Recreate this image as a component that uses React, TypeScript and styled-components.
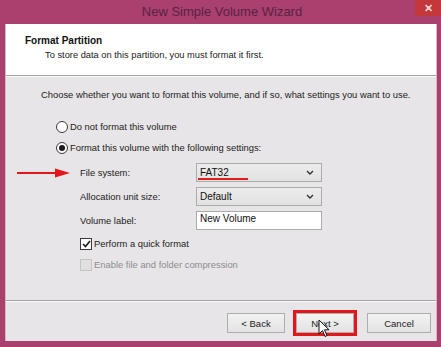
import React from "react";
import styled, { createGlobalStyle } from "styled-components";

const GlobalStyle = createGlobalStyle`
  html, body { margin: 0; padding: 0; background: #a9406e; }
  body { font-family: "Liberation Sans", Arial, sans-serif; }
`;

const Frame = styled.div`
  position: relative;
  width: 441px;
  height: 347px;
  background: #a9406e;
  overflow: hidden;
  display: flex;
  flex-direction: column;
`;

const TitleBar = styled.div`
  height: 24px;
  display: grid;
  grid-template-columns: 26px 1fr 26px;
  align-items: start;
`;

const Title = styled.div`
  grid-column: 2;
  text-align: center;
  font-size: 13px;
  line-height: 24px;
  color: #5a2244;
  padding-left: 3px;
`;

const CloseButton = styled.div`
  height: 16px;
  background: #c4373a;
  color: #f4d9d9;
  font-size: 11px;
  font-weight: bold;
  display: flex;
  align-items: center;
  justify-content: center;
`;

const Window = styled.div`
  margin: 0 4px 0 5px;
  height: 317px;
  display: flex;
  flex-direction: column;
  border-left: 1px solid #d8b4c6;
  border-right: 1px solid #d8b4c6;
  box-sizing: border-box;
`;

const Header = styled.div`
  height: 52px;
  box-sizing: border-box;
  background: #ffffff;
  border-bottom: 1px solid #a3a3a3;
  padding: 10px 0 0 19px;
`;

const HeaderTitle = styled.div`
  font-weight: bold;
  font-size: 10px;
  line-height: 13px;
  color: #111;
`;

const HeaderSub = styled.div`
  font-size: 9.3px;
  line-height: 13px;
  color: #222;
  margin: 2px 0 0 20px;
`;

const Body = styled.div`
  flex: 1;
  background: #e7e5e7;
  border-top: 1px solid #fafafa;
  padding: 11px 0 0 35px;
  display: flex;
  flex-direction: column;
`;

const Text = styled.div<{ $muted?: boolean }>`
  font-size: 9.4px;
  line-height: 14px;
  color: ${(p) => (p.$muted ? "#8e8c8e" : "#1c1c1c")};
`;

const RadioGroup = styled.div`
  display: flex;
  flex-direction: column;
  gap: 5px;
  margin: 17px 0 0 15px;
`;

const OptionRow = styled.label`
  display: flex;
  align-items: center;
  gap: 2px;
  height: 16px;
`;

const RadioCircle = styled.span<{ $checked?: boolean }>`
  width: 12px;
  height: 12px;
  box-sizing: border-box;
  border-radius: 50%;
  border: 1px solid #3b3b3b;
  background: #fdfdfd;
  display: flex;
  align-items: center;
  justify-content: center;
  &::after {
    content: "";
    width: 6px;
    height: 6px;
    border-radius: 50%;
    background: ${(p) => (p.$checked ? "#1a1a1a" : "transparent")};
  }
`;

const FormGrid = styled.div`
  display: grid;
  grid-template-columns: 116px 126px;
  grid-auto-rows: 19px;
  row-gap: 5px;
  margin: 7px 0 0 39px;
  align-items: center;
`;

const LabelCell = styled.div`
  position: relative;
  font-size: 9.4px;
  color: #1c1c1c;
`;

const Arrow = styled.svg`
  position: absolute;
  left: -63px;
  top: 50%;
  margin-top: -5px;
`;

const Combo = styled.div`
  position: relative;
  height: 19px;
  box-sizing: border-box;
  border: 1px solid #ababab;
  background: linear-gradient(#ececec, #e2e2e2);
  display: flex;
  align-items: center;
  justify-content: space-between;
  padding: 0 7px 0 3px;
  font-size: 10px;
  color: #111;
`;

const Underline = styled.span`
  position: absolute;
  left: 1px;
  bottom: 1px;
  width: 50px;
  height: 2px;
  background: #e21b1b;
`;

const TextBox = styled.div`
  height: 19px;
  box-sizing: border-box;
  border: 1px solid #ababab;
  background: #ffffff;
  padding: 1px 0 0 3px;
  font-size: 10px;
  color: #111;
`;

const CheckGroup = styled.div`
  display: flex;
  flex-direction: column;
  gap: 5px;
  margin: 6px 0 0 39px;
`;

const CheckBox = styled.span<{ $disabled?: boolean }>`
  width: 12px;
  height: 12px;
  box-sizing: border-box;
  border: 1px solid ${(p) => (p.$disabled ? "#c4c4c4" : "#3a3a3a")};
  background: ${(p) => (p.$disabled ? "#e0e0e0" : "#fdfdfd")};
  display: flex;
  align-items: center;
  justify-content: center;
`;

const Footer = styled.div`
  height: 41px;
  box-sizing: border-box;
  background: #e7e5e7;
  border-top: 1px solid #a3a3a3;
  box-shadow: inset 0 1px 0 #fafafa;
  padding: 12px 5px 0 0;
  display: flex;
  justify-content: flex-end;
  align-items: flex-start;
`;

const Button = styled.div<{ $w: number; $gap: number; $marked?: boolean }>`
  width: ${(p) => p.$w}px;
  height: 20px;
  margin-left: ${(p) => p.$gap}px;
  box-sizing: border-box;
  border: 1px solid #adadad;
  background: linear-gradient(#f2f2f2, #e3e3e3);
  font-size: 9.5px;
  color: #1c1c1c;
  display: flex;
  align-items: center;
  justify-content: center;
  outline: ${(p) => (p.$marked ? "3px solid #e3161b" : "none")};
`;

const Cursor = styled.svg`
  position: absolute;
  left: 318px;
  top: 319px;
`;

const Chevron = () => (
  <svg width="8" height="5" viewBox="0 0 8 5">
    <path d="M1 1 L4 4 L7 1" fill="none" stroke="#333" strokeWidth="1.4" />
  </svg>
);

export default function App() {
  return (
    <Frame>
      <GlobalStyle />
      <TitleBar>
        <Title>New Simple Volume Wizard</Title>
        <CloseButton>✕</CloseButton>
      </TitleBar>
      <Window>
        <Header>
          <HeaderTitle>Format Partition</HeaderTitle>
          <HeaderSub>To store data on this partition, you must format it first.</HeaderSub>
        </Header>
        <Body>
          <Text>Choose whether you want to format this volume, and if so, what settings you want to use.</Text>
          <RadioGroup>
            <OptionRow>
              <RadioCircle />
              <Text>Do not format this volume</Text>
            </OptionRow>
            <OptionRow>
              <RadioCircle $checked />
              <Text>Format this volume with the following settings:</Text>
            </OptionRow>
          </RadioGroup>
          <FormGrid>
            <LabelCell>
              <Arrow width="54" height="10" viewBox="0 0 54 10">
                <line x1="0" y1="5" x2="42" y2="5" stroke="#e3161b" strokeWidth="2" />
                <path d="M38 0.5 L53 5 L38 9.5 Z" fill="#e3161b" />
              </Arrow>
              File system:
            </LabelCell>
            <Combo>
              FAT32
              <Chevron />
              <Underline />
            </Combo>
            <LabelCell>Allocation unit size:</LabelCell>
            <Combo>
              Default
              <Chevron />
            </Combo>
            <LabelCell>Volume label:</LabelCell>
            <TextBox>New Volume</TextBox>
          </FormGrid>
          <CheckGroup>
            <OptionRow>
              <CheckBox>
                <svg width="9" height="8" viewBox="0 0 9 8">
                  <path d="M1 4 L3.5 6.5 L8 1" fill="none" stroke="#1a1a1a" strokeWidth="1.6" />
                </svg>
              </CheckBox>
              <Text>Perform a quick format</Text>
            </OptionRow>
            <OptionRow>
              <CheckBox $disabled />
              <Text $muted>Enable file and folder compression</Text>
            </OptionRow>
          </CheckGroup>
        </Body>
        <Footer>
          <Button $w={58} $gap={0}>&lt; Back</Button>
          <Button $w={58} $gap={11} $marked>Next &gt;</Button>
          <Button $w={64} $gap={13}>Cancel</Button>
        </Footer>
      </Window>
      <Cursor width="12" height="20" viewBox="0 0 12 20">
        <path d="M1 1 L1 15 L4.5 11.5 L7 17.5 L9 16.5 L6.5 10.8 L11 10.8 Z" fill="#fff" stroke="#111" strokeWidth="1" strokeLinejoin="round" />
      </Cursor>
    </Frame>
  );
}
